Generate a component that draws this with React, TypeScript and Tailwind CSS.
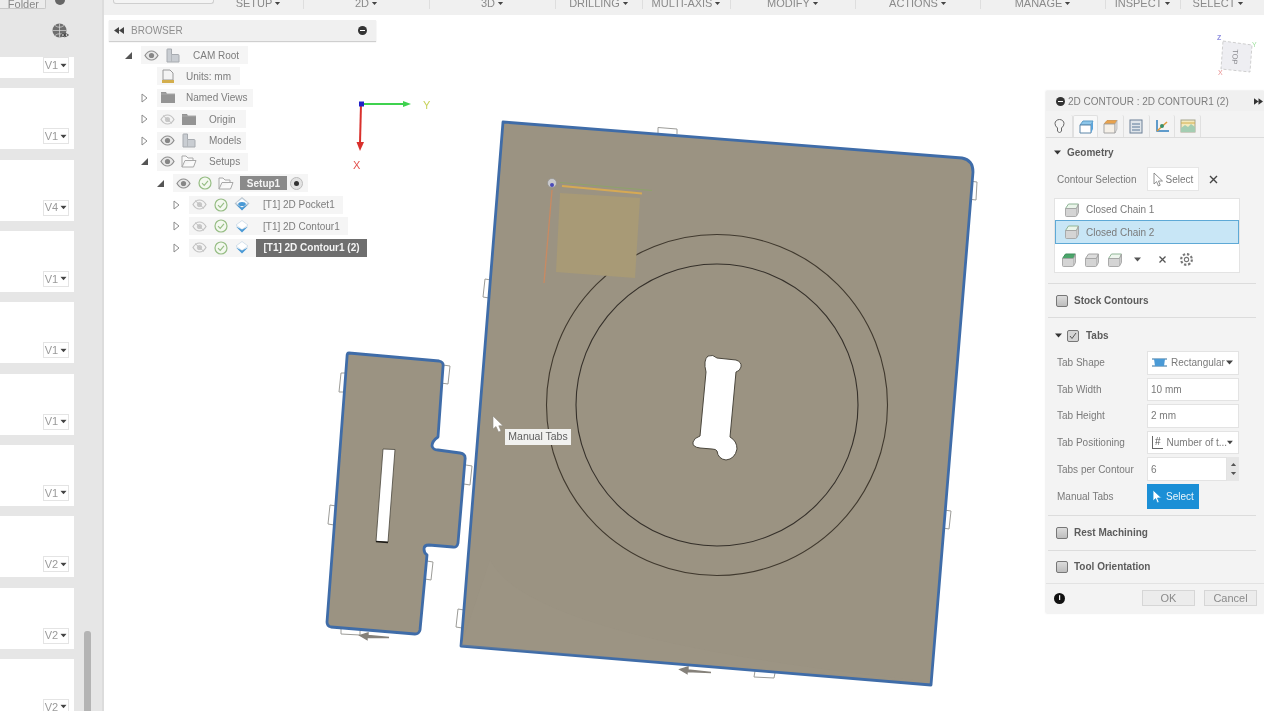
import React from "react";

const Caret = ({ className = "" }: { className?: string }) => (
  <svg width="7" height="5" viewBox="0 0 7 5" className={className}><path d="M0 0.5H7L3.5 4.5Z" fill="currentColor" /></svg>
);

const Eye = ({ off }: { off?: boolean }) => (
  <svg width="15" height="11" viewBox="0 0 15 11">
    <path d="M1 5.5C3 2 5 1 7.5 1S12 2 14 5.5C12 9 10 10 7.5 10S3 9 1 5.5Z" fill={off ? "#f4f4f4" : "#e8e8e8"} stroke={off ? "#c2c2c2" : "#8d8d8d"} strokeWidth="1.2" />
    <circle cx="7.5" cy="5.5" r="2.6" fill={off ? "#c8c8c8" : "#868686"} />
    {off && <path d="M3 1.5L12 9.5" stroke="#c2c2c2" />}
  </svg>
);

const Check = () => (
  <svg width="14" height="14" viewBox="0 0 14 14">
    <circle cx="7" cy="7" r="6" fill="#f3f8ef" stroke="#96bd84" strokeWidth="1.2" />
    <path d="M4 7.2L6.2 9.4L10 4.8" fill="none" stroke="#96bd84" strokeWidth="1.1" />
  </svg>
);

const Folder = () => (
  <svg width="16" height="13" viewBox="0 0 16 13"><path d="M1 1H6L7 3H15V12H1Z" fill="#949494" /><path d="M1 3H15" stroke="#aaa" /></svg>
);

const OpenFolder = () => (
  <svg width="16" height="13" viewBox="0 0 16 13"><path d="M1 12V1H5L7 3H12V5.5M1 12H12.5L15 5.5H4L1 12Z" fill="#fafafa" stroke="#a8a8a8" /></svg>
);

const Body = () => (
  <svg width="14" height="15" viewBox="0 0 14 15"><path d="M1 14V1.5Q1 1 1.5 1H5.5V6.5H12Q13 6.5 13 7.5V14Z" fill="#c9cdd2" stroke="#a7abb0" /><path d="M5.5 6.5V14" stroke="#b3b7bb" /></svg>
);

const Doc = () => (
  <svg width="14" height="15" viewBox="0 0 14 15"><path d="M2 1H9L12 4V11H2Z" fill="#f4f4f4" stroke="#9a9a9a" /><rect x="1" y="11" width="12" height="3" fill="#d3ae4d" /></svg>
);

const Diamond = ({ filled }: { filled?: boolean }) => (
  <svg width="16" height="15" viewBox="0 0 16 15">
    {filled && <path d="M8 0L15.5 6.5L8 13L0.5 6.5Z" fill="#bcc4cc" />}
    <path d="M8 1.5L14 6L8 10.5L2 6Z" fill="#fff" stroke="#b9cfe0" strokeWidth="0.6" />
    <path d="M2 7.6L8 13.5L14 7.6L8 10.6Z" fill="#4a9ad6" />
    {filled && <ellipse cx="8" cy="7" rx="3.8" ry="2.1" fill="#4a9ad6" />}
  </svg>
);

const Twist = ({ open }: { open?: boolean }) =>
  open ? (
    <svg width="7" height="7" viewBox="0 0 7 7"><path d="M7 0V7H0Z" fill="#555" /></svg>
  ) : (
    <svg width="7" height="10" viewBox="0 0 7 10"><path d="M1 1L6 5L1 9Z" fill="#fff" stroke="#8c8c8c" /></svg>
  );

const Cell = ({ children }: { children?: React.ReactNode }) => (
  <span className="flex w-[21px] shrink-0 items-center justify-center">{children}</span>
);

type Row = { level: number; twist?: "open" | "closed"; icons: React.ReactNode[]; text: string; textClass: string };

const treeRows: Row[] = [
  { level: 0, twist: "open", icons: [<Eye />, <Body />], text: "CAM Root", textClass: "ml-[10px] mr-[9px]" },
  { level: 1, icons: [<Doc />], text: "Units: mm", textClass: "ml-[8px] mr-[9px]" },
  { level: 1, twist: "closed", icons: [<Folder />], text: "Named Views", textClass: "ml-[8px] mr-[5px]" },
  { level: 1, twist: "closed", icons: [<Eye off />, <Folder />], text: "Origin", textClass: "ml-[10px] mr-[10px]" },
  { level: 1, twist: "closed", icons: [<Eye />, <Body />], text: "Models", textClass: "ml-[10px] mr-[5px]" },
  { level: 1, twist: "open", icons: [<Eye />, <OpenFolder />], text: "Setups", textClass: "ml-[10px] mr-[8px]" },
];

const opRows = [
  { filled: true, text: "[T1] 2D Pocket1" },
  { filled: false, text: "[T1] 2D Contour1" },
];

const Pill = ({ children }: { children: React.ReactNode }) => (
  <div className="ml-[5px] flex h-[18px] items-center whitespace-nowrap bg-[#f5f5f5] text-[10px] text-[#7d7d7d]">{children}</div>
);

const Browser = () => (
  <div className="absolute left-[5px] top-[5px] w-[267px]">
    <div className="flex h-[21px] items-center bg-[#f0f0f0] pl-[5px] pr-[9px] text-[10px] text-[#8f8f8f] shadow-[0_1px_1px_#cfcfcf]">
      <svg width="10" height="7" viewBox="0 0 10 7" className="mr-[7px]"><path d="M5 0V7L0 3.5ZM10 0V7L5 3.5Z" fill="#444" /></svg>
      <span>BROWSER</span>
      <span className="ml-auto flex h-[9px] w-[9px] items-center justify-center rounded-full bg-[#333]"><span className="h-[1px] w-[5px] bg-white" /></span>
    </div>
    <div className="mt-[5px] flex flex-col gap-[3.4px]">
      {treeRows.map((r) => (
        <div key={r.text} className="flex h-[18px] items-center" style={{ paddingLeft: 11 + r.level * 16 }}>
          <span className="flex w-[16px] justify-center">{r.twist && <Twist open={r.twist === "open"} />}</span>
          <Pill>
            {r.icons.map((ic, i) => <Cell key={i}>{ic}</Cell>)}
            <span className={r.textClass}>{r.text}</span>
          </Pill>
        </div>
      ))}
      <div className="flex h-[18px] items-center pl-[43px]">
        <span className="flex w-[16px] justify-center"><Twist open /></span>
        <Pill>
          <Cell><Eye /></Cell>
          <Cell><Check /></Cell>
          <Cell><OpenFolder /></Cell>
          <span className="ml-[4px] flex h-[14px] w-[47px] items-center justify-center bg-[#8a8a8a] font-bold text-[#f4f4f4]">Setup1</span>
          <span className="ml-[3px] mr-[5px] flex h-[13px] w-[13px] items-center justify-center rounded-full border border-[#bbb] bg-[#e3e3e3]"><span className="h-[5px] w-[5px] rounded-full bg-[#333]" /></span>
        </Pill>
      </div>
      {opRows.map((o) => (
        <div key={o.text} className="flex h-[18px] items-center pl-[59px]">
          <span className="flex w-[16px] justify-center"><Twist /></span>
          <Pill>
            <Cell><Eye off /></Cell>
            <Cell><Check /></Cell>
            <Cell><Diamond filled={o.filled} /></Cell>
            <span className="ml-[11px] mr-[8px]">{o.text}</span>
          </Pill>
        </div>
      ))}
      <div className="flex h-[18px] items-center pl-[59px]">
        <span className="flex w-[16px] justify-center"><Twist /></span>
        <Pill>
          <Cell><Eye off /></Cell>
          <Cell><Check /></Cell>
          <Cell><Diamond /></Cell>
          <span className="ml-[4px] flex h-[18px] w-[111px] items-center justify-center bg-[#6e6e6e] font-bold text-[#f4f4f4]">[T1] 2D Contour1 (2)</span>
        </Pill>
      </div>
    </div>
  </div>
);

const Chain = ({ top = "#eaf5ea", edge = "#8fb596" }: { top?: string; edge?: string }) => (
  <svg width="16" height="16" viewBox="0 0 16 16">
    <path d="M1.5 6.5L4.5 2H14.5L12.5 6.5Z" fill={top} stroke={edge} strokeWidth="1" />
    <path d="M1.5 6.5H12.5V13.5Q12.5 14.5 11.5 14.5H2.5Q1.5 14.5 1.5 13.5Z" fill="#d4d4d4" stroke="#a4a4a4" strokeWidth="0.9" />
    <path d="M12.5 6.5L14.5 2V10.5L12.5 14" fill="#cbcbcb" stroke="#a4a4a4" strokeWidth="0.9" />
  </svg>
);

const Cursor = ({ color = "#fff", stroke = "#777" }: { color?: string; stroke?: string }) => (
  <svg width="11" height="15" viewBox="0 0 11 15"><path d="M1 1V12L3.6 9.6L5.4 14L7.2 13.2L5.5 9H9.5Z" fill={color} stroke={stroke} strokeWidth="0.8" /></svg>
);

const Box = () => (
  <span className="h-[12px] w-[12px] shrink-0 rounded-[2px] border border-[#777] bg-gradient-to-b from-[#dcdcdc] to-[#bdbdbd]" />
);

const Field = ({ label, children, tall }: { label: string; children: React.ReactNode; tall?: boolean }) => (
  <div className={`flex items-center ${tall ? "h-[25px]" : "h-[23.6px]"}`}>
    <span className="w-[90px] shrink-0 text-[#7a7a7a]">{label}</span>
    {children}
  </div>
);

const Input = ({ children }: { children: React.ReactNode }) => (
  <div className="flex h-full w-[92px] items-center whitespace-nowrap border border-[#e3e3e3] bg-white px-[3px] text-[#7a7a7a]">{children}</div>
);

const tabIcons = [
  <svg width="11" height="15" viewBox="0 0 11 15"><path d="M1 4.5A4.5 4 0 1 1 10 4.5Q10 7 7.5 9V12L5.5 14L3.5 12V9Q1 7 1 4.5Z" fill="#f4f4f4" stroke="#666" /></svg>,
  <svg width="16" height="16" viewBox="0 0 16 16"><path d="M2 6L5 2H15L13 6Z" fill="#8cc6ea" stroke="#5a9bc6" /><path d="M2 6H13V14H2Z" fill="#fff" stroke="#5c86a8" /><path d="M13 6L15 2V10L13 14Z" fill="#5aa3da" /></svg>,
  <svg width="15" height="15" viewBox="0 0 15 15"><path d="M1 5L4 1.5H14L12 5Z" fill="#e9a24c" stroke="#c98a3c" strokeWidth="0.7" /><path d="M1 5H12V14H1Z" fill="#f5f0e8" stroke="#a5a5a5" /><path d="M12 5L14 1.5V10L12 14Z" fill="#e0e0e0" stroke="#a5a5a5" strokeWidth="0.6" /></svg>,
  <svg width="14" height="15" viewBox="0 0 14 15"><rect x="1" y="1" width="12" height="13" fill="#dfe5ea" stroke="#6c8098" /><path d="M3 5H11M3 8H11M3 11H11" stroke="#5a7898" /></svg>,
  <svg width="16" height="15" viewBox="0 0 16 15"><path d="M3 1V12H15" fill="none" stroke="#2f7fbf" strokeWidth="1.5" /><path d="M3 12L13 3" stroke="#e19a3a" strokeWidth="1.5" /><circle cx="8" cy="7" r="2" fill="#3a8f6a" /></svg>,
  <svg width="16" height="14" viewBox="0 0 16 14"><rect x="1" y="1" width="14" height="12" fill="#f3e9bd" stroke="#a5a58e" /><path d="M1 9L5 6L8 8L11 5L15 8V13H1Z" fill="#a4cdb2" /><path d="M1 4H15" stroke="#d3ae4d" /></svg>,
];

const Contour = () => (
  <div className="absolute right-0 top-[76px] w-[218px] bg-[#f3f3f3] text-[10px] shadow-[0_0_2px_#d8d8d8]">
    <div className="flex h-[20px] items-center bg-[#f0f0f0] pl-[10px] pr-[1px] text-[#7d7d7d]">
      <span className="mr-[3px] flex h-[9px] w-[9px] items-center justify-center rounded-full bg-[#333]"><span className="h-[1px] w-[5px] bg-white" /></span>
      <span>2D CONTOUR : 2D CONTOUR1 (2)</span>
      <svg width="9" height="7" viewBox="0 0 10 7" className="ml-auto"><path d="M0 0V7L5 3.5ZM5 0V7L10 3.5Z" fill="#333" /></svg>
    </div>
    <div className="flex h-[27px] items-stretch border-b border-[#dcdcdc] pl-[1px] pt-[4px]">
      {tabIcons.map((ic, i) => (
        <span key={i} className={`flex w-[25.7px] items-center justify-center rounded-t-[2px] border-r border-[#e0e0e0] ${i === 1 ? "border-l border-t bg-[#f8f8f8]" : ""}`}>{ic}</span>
      ))}
    </div>
    <div className="flex h-[28px] items-center pl-[8px] text-[#5c5c5c]">
      <Caret className="mr-[6px] text-[#333]" />
      <span className="font-semibold">Geometry</span>
    </div>
    <div className="mt-[1px] flex h-[24px] items-center pl-[11px]">
      <span className="w-[90px] text-[#7a7a7a]">Contour Selection</span>
      <span className="flex h-full w-[52px] items-center justify-center gap-[2px] border border-[#e6e6e6] bg-white text-[#7a7a7a]"><Cursor />Select</span>
      <svg width="9" height="9" viewBox="0 0 9 9" className="ml-[10px]"><path d="M1 1L8 8M8 1L1 8" stroke="#444" strokeWidth="1.4" /></svg>
    </div>
    <div className="ml-[8px] mt-[7px] h-[75px] w-[186px] border border-[#e3e3e3] bg-white text-[#7a7a7a]">
      <div className="flex h-[21px] items-center gap-[6px] pl-[9px]"><Chain /><span>Closed Chain 1</span></div>
      <div className="flex h-[24px] items-center gap-[6px] border border-[#5ea9d6] bg-[#c8e6f6] pl-[8px]"><Chain /><span>Closed Chain 2</span></div>
      <div className="flex h-[28px] items-center pl-[6px] pt-[3px]">
        <span className="mr-[7px]"><Chain top="#4aa56a" edge="#3f8f5c" /></span>
        <span className="mr-[7px]"><Chain top="#dddddd" edge="#a4a4a4" /></span>
        <span className="mr-[11px]"><Chain top="#eef6ee" /></span>
        <Caret className="mr-[17px] text-[#555]" />
        <svg width="9" height="9" viewBox="0 0 9 9" className="mr-[12px]"><path d="M1.5 1.5L7.5 7.5M7.5 1.5L1.5 7.5" stroke="#555" strokeWidth="1.3" /></svg>
        <svg width="15" height="15" viewBox="0 0 14 14" fill="none" stroke="#777"><circle cx="7" cy="7" r="2" /><circle cx="7" cy="7" r="5" strokeDasharray="2.2 1.7" strokeWidth="2" /></svg>
      </div>
    </div>
    <div className="mr-[8px] ml-[2px] mt-[10px] h-[1px] bg-[#dcdcdc]" />
    <div className="ml-[2px] mr-[8px] flex h-[34px] items-center gap-[6px] border-b border-[#dcdcdc] pl-[8px] font-semibold text-[#5c5c5c]">
      <Box />Stock Contours
    </div>
    <div className="flex h-[33px] items-center pl-[9px] pt-[2px] font-semibold text-[#5c5c5c]">
      <Caret className="mr-[5px] text-[#333]" />
      <span className="mr-[7px] flex h-[12px] w-[12px] items-center justify-center rounded-[2px] border border-[#777] bg-[#d4d4d4]">
        <svg width="8" height="8" viewBox="0 0 8 8"><path d="M1 4L3 6.5L7 1" fill="none" stroke="#555" /></svg>
      </span>
      Tabs
    </div>
    <div className="flex flex-col gap-[3px] pl-[11px] pr-[25px]">
      <Field label="Tab Shape">
        <Input>
          <svg width="15" height="9" viewBox="0 0 15 9" className="mr-[4px] ml-[1px]"><path d="M0 1H15M0 8H15" stroke="#2c6d9c" /><path d="M2 1H13L12 8H3Z" fill="#4a9ad6" /></svg>
          <span>Rectangular</span><Caret className="ml-auto mr-[2px] text-[#444]" />
        </Input>
      </Field>
      <Field label="Tab Width"><Input>10 mm</Input></Field>
      <Field label="Tab Height"><Input>2 mm</Input></Field>
      <Field label="Tab Positioning">
        <Input>
          <span className="mr-[4px] ml-[1px] border-b border-l border-[#666] px-[2px] text-[10px] leading-[12px] text-[#555]">#</span>
          <span>Number of t...</span><Caret className="ml-auto mr-[2px] text-[#444]" />
        </Input>
      </Field>
      <Field label="Tabs per Contour">
        <div className="flex h-full w-[92px]">
          <div className="flex flex-1 items-center border border-[#e3e3e3] bg-white px-[3px] text-[#7a7a7a]">6</div>
          <div className="flex w-[12px] flex-col items-center justify-around bg-[#e6e6e6] py-[3px]">
            <Caret className="rotate-180 scale-75 text-[#555]" />
            <Caret className="scale-75 text-[#555]" />
          </div>
        </div>
      </Field>
      <Field label="Manual Tabs" tall>
        <span className="flex h-full w-[52px] items-center justify-center gap-[3px] bg-[#1b8fd6] text-[#eaf5fb]"><Cursor stroke="#1b8fd6" />Select</span>
      </Field>
    </div>
    <div className="ml-[2px] mr-[8px] mt-[6px] h-[1px] bg-[#dcdcdc]" />
    <div className="ml-[2px] mr-[8px] flex h-[35px] items-center gap-[6px] border-b border-[#dcdcdc] pl-[8px] font-semibold text-[#5c5c5c]">
      <Box />Rest Machining
    </div>
    <div className="flex h-[32px] items-center gap-[6px] pl-[10px] font-semibold text-[#5c5c5c]">
      <Box />Tool Orientation
    </div>
    <div className="flex h-[30px] items-center border-t border-[#e2e2e2] pl-[8px] pr-[7px] text-[11px] text-[#8a8a8a]">
      <span className="flex h-[11px] w-[11px] items-center justify-center rounded-full bg-[#111] text-[8px] font-bold leading-none text-white">i</span>
      <span className="ml-auto flex h-[16px] w-[53px] items-center justify-center border border-[#d6d6d6] bg-[#ececec]">OK</span>
      <span className="ml-[9px] flex h-[16px] w-[53px] items-center justify-center border border-[#d6d6d6] bg-[#ececec]">Cancel</span>
    </div>
  </div>
);

const plateTabs = [
  "M658 133V127.5L677 129V134",
  "M969 181L977 182L976 200L968 199",
  "M944 510L951 511L949 529L943 528",
  "M755 671L754 677L774 678L775 673",
  "M464 610L458 609L456 627L462 628",
  "M491 280L485 279L483 297L489 298",
  "M347 373L341 373L339 392L346 392",
  "M443 365L450 366L448 384L441 383",
  "M466 465L472 466L470 485L464 484",
  "M336 506L330 505L328 524L334 525",
  "M427 561L433 562L431 580L425 579",
  "M341 629L341 634L360 635L360 631",
];

const Scene = () => (
  <svg viewBox="104 15 1160 696" className="absolute inset-0 h-full w-full">
    <g>
      {plateTabs.map((d) => <path key={d} d={d} fill="#fff" stroke="#9c9c98" strokeWidth="1" />)}
    </g>
    <path d="M503 122L962 158Q973 160 973 172L931 685L461 646Z" fill="#9b9382" stroke="#3f6ca8" strokeWidth="2.8" strokeLinejoin="round" />
    <path d="M490 560Q530 640 931 682L461 646Z" fill="#a09887" opacity="0.25" />
    <circle cx="717" cy="405" r="170.5" fill="none" stroke="#40392e" strokeWidth="1.1" />
    <circle cx="717" cy="405" r="141" fill="none" stroke="#35302a" strokeWidth="1.1" />
    <path d="M708 356Q713 354 717 358L736 360Q742 362 741 367Q740 371 736 372L730 437Q737 441 737 449Q735 459 726 460Q718 459 717 451Q716 449 712 449L700 448Q692 447 693 442Q694 438 700 436L706 372Q703 360 708 356Z" fill="#fff" stroke="#4a463c" strokeWidth="1" />
    <path d="M560 193L640 198L635 278L556 272Z" fill="#a89a76" />
    <path d="M562 186L642 193.5" stroke="#d6a954" strokeWidth="2" />
    <path d="M560 182.5L652 190.5" stroke="#8ea36a" strokeWidth="1" />
    <path d="M552 190L544 283" stroke="#c98a62" strokeWidth="1.3" />
    <circle cx="552" cy="183" r="4.5" fill="#c9c9cc" stroke="#8b8b88" strokeWidth="0.6" />
    <circle cx="552" cy="185" r="2" fill="#4a4ab8" />

    <path d="M349 353L439 361Q444 362 443 367L438 437Q432 441 432 446Q433 450 438 450L460 453Q466 454 465 460L458 543Q457 548 453 547L429 545Q424 545 424 549Q424 553 427 555L420 630Q419 634 415 634L331 627Q327 626 327 622L347 357Q347 353 349 353Z" fill="#9b9382" stroke="#3f6ca8" strokeWidth="2.8" strokeLinejoin="round" />
    <path d="M383 449L395 449.5L388 542L376 541.5Z" fill="#fff" stroke="#4a463c" strokeWidth="0.8" />
    <path d="M376 541.5L388 542.5" stroke="#1d1b17" strokeWidth="1.4" />
    <path d="M389 637.5L368 635.5V633L360 635.5L367 639.5V637.5Z" fill="#85817a" stroke="#85817a" strokeWidth="1.4" />
    <path d="M711 672.5L688 670V667L680 669.5L687 673.5V671.5Z" fill="#85817a" stroke="#85817a" strokeWidth="1.4" />

    <path d="M361 104H403" stroke="#3fd24f" strokeWidth="2" />
    <path d="M403 101L411 104L403 107Z" fill="#3fd24f" />
    <path d="M361 104L360 143" stroke="#d9302c" strokeWidth="2" />
    <path d="M356.5 142H364L360 151Z" fill="#d9302c" />
    <rect x="359" y="101.5" width="5" height="5" fill="#2020c8" />
    <text x="423" y="109" fontSize="11" fill="#c7d25a" fontFamily="Liberation Sans">Y</text>
    <text x="353" y="169" fontSize="11" fill="#e3524e" fontFamily="Liberation Sans">X</text>

    <path d="M1223 41L1252 45L1250 72L1221 69Z" fill="#eeeef2" stroke="#c4c4c4" strokeDasharray="3 2" strokeWidth="0.8" />
    <text x="0" y="0" fontSize="7.5" fill="#8b8b90" fontFamily="Liberation Sans" transform="translate(1233 49) rotate(94)">TOP</text>
    <text x="1217" y="40" fontSize="7" fill="#8e8ee0" fontFamily="Liberation Sans" fontWeight="bold">Z</text>
    <text x="1252" y="47" fontSize="7" fill="#9ee09e" fontFamily="Liberation Sans">Y</text>
    <text x="1218" y="75" fontSize="7" fill="#e89090" fontFamily="Liberation Sans">X</text>
  </svg>
);

const menu: [string, number][] = [
  ["SETUP", 90], ["2D", 126], ["3D", 126], ["DRILLING", 87], ["MULTI-AXIS", 88],
  ["MODIFY", 125], ["ACTIONS", 125], ["MANAGE", 125], ["INSPECT", 75], ["SELECT", 75],
];

const Toolbar = () => (
  <div className="flex h-[15px] shrink-0 items-start bg-[#f0f0f0] pl-[9px] text-[11px] text-[#8a8a8a]">
    <div className="h-[4px] w-[101px] rounded-b-[3px] border border-t-0 border-[#cfcfcf] bg-[#f4f4f4]" />
    {menu.map(([m, w]) => (
      <div key={m} className="flex h-[9px] items-start justify-center gap-[2px] border-r border-[#dedede] last:border-r-0" style={{ width: w }}>
        <span className="-mt-[3px] leading-[13px]">{m}</span>
        <Caret className="mt-[1px] scale-75 text-[#444]" />
      </div>
    ))}
  </div>
);

const versions = ["V1", "V1", "V4", "V1", "V1", "V1", "V1", "V2", "V2", "V2"];

const Sidebar = () => (
  <div className="relative flex h-full w-[104px] shrink-0 flex-col overflow-hidden border-r-2 border-[#dcdcdc] bg-[#e6e6e6]">
    <div className="relative h-[57px] shrink-0">
      <div className="flex h-[9px] w-[46px] items-end justify-end rounded-br-[2px] border-b border-r border-[#c8c8c8] bg-[#ececec] pr-[6px] text-[11px] leading-[8px] text-[#888]">Folder</div>
      <svg width="14" height="8" viewBox="0 0 14 8" className="absolute left-[53px] top-0"><circle cx="7" cy="0" r="5" fill="#666" /></svg>
      <svg width="17" height="16" viewBox="0 0 17 16" className="absolute left-[52px] top-[23px]">
        <circle cx="7.5" cy="7.5" r="7" fill="#6f6f6f" />
        <path d="M0.5 7.5H14.5M7.5 0.5V14.5M3 2.5Q7.5 6 12 2.5M3 12.5Q7.5 9 12 12.5" stroke="#ddd" strokeWidth="0.7" fill="none" />
        <path d="M9 12Q12.5 8.8 16.5 12Q12.5 15.5 9 12Z" fill="#e6e6e6" stroke="#555" />
        <circle cx="12.7" cy="12" r="1.3" fill="#444" />
      </svg>
    </div>
    <div className="flex flex-col gap-[10.33px]">
      {versions.map((v, i) => (
        <div key={i} className={`flex w-[74px] shrink-0 items-end justify-end bg-white pb-[5px] pr-[5px] ${i === 0 ? "h-[21px]" : "h-[61px]"}`}>
          <span className="flex h-[16px] w-[26px] items-center justify-center gap-[2px] border border-[#e4e4e4] bg-white text-[11px] text-[#9a9a9a]">
            {v}<Caret className="scale-90 text-[#444]" />
          </span>
        </div>
      ))}
    </div>
    <div className="absolute left-[84px] top-[631px] h-[80px] w-[7px] rounded-t-[3px] bg-[#b4b4b4]" />
  </div>
);

export default function App() {
  return (
    <div className="flex h-[711px] w-[1264px] overflow-hidden bg-white blur-[0.6px] [font-family:'Liberation_Sans',Arial,sans-serif]">
      <Sidebar />
      <div className="flex min-w-0 flex-1 flex-col">
        <Toolbar />
        <div className="relative flex-1">
          <Scene />
          <Browser />
          <Contour />
          <svg width="12" height="18" viewBox="0 0 12 18" className="absolute left-[388px] top-[400px]"><path d="M1 1V14L4 11.5L6.5 17L9 16L6.8 10.8H11Z" fill="#fff" stroke="#8f8a80" strokeWidth="0.6" /></svg>
          <div className="absolute left-[401px] top-[414px] flex h-[16px] w-[66px] items-center justify-center bg-[#f1f1ef] text-[10.5px] text-[#5e5e5e]">Manual Tabs</div>
        </div>
      </div>
    </div>
  );
}
